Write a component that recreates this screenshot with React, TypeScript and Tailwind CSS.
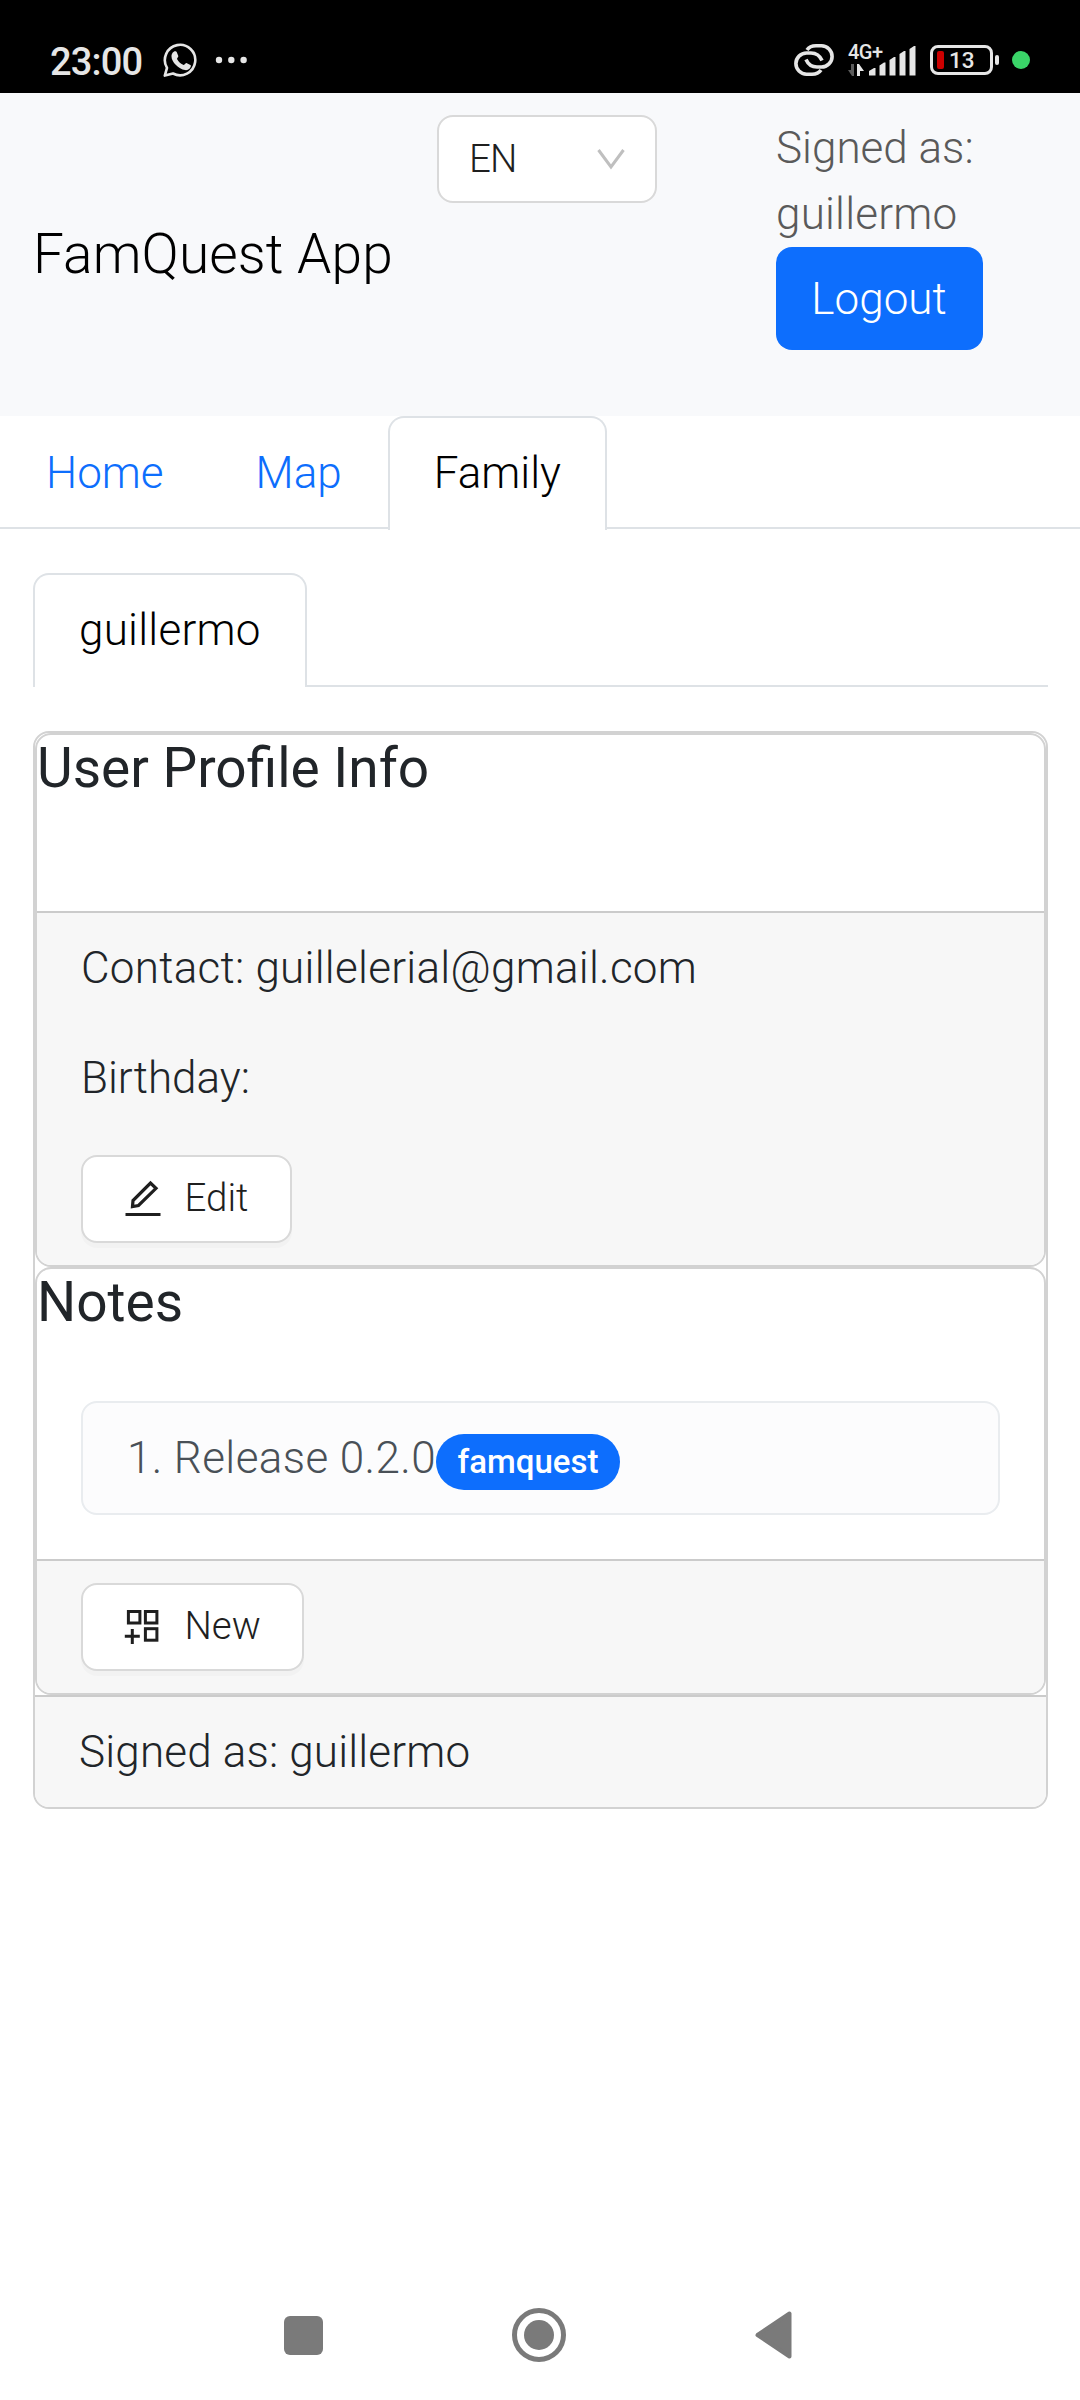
import React from "react";

function StatusBar() {
  return (
    <div className="flex h-[93px] w-full shrink-0 items-start bg-black text-[#e6e6e6]">
      <div className="ml-[50px] mt-[40px] w-[93px] text-[38px] leading-[45px] font-medium tracking-[-0.8px]">23:00</div>
      <svg className="ml-[19px] mt-[42px]" width="37" height="37" viewBox="0 0 37 37" fill="none" stroke="currentColor">
        <path strokeWidth="2.600" strokeLinejoin="round" d="M2.800 33.600 5 25.800A15.200 15.200 0 1 1 11 31.500z" />
        <path fill="currentColor" stroke="none" d="M13.200 9.200c.8 0 1.200.2 1.500.9l1.600 3.800c.3.800-1.500 2.400-1.300 3 1.600 3.100 3.800 4.900 6.700 6 .8.200 2-2 2.700-1.800l4 1.900c.6.3.5 1 .3 1.800-.7 2.500-3.600 3.600-5.600 3.300-3.500-.5-6.500-2.300-9.400-5.300-2.300-2.500-4.200-5.200-4.200-8.300 0-2.800 1.700-5.300 3.700-5.300z" />
      </svg>
      <svg className="ml-[16px] mt-[54px]" width="34" height="12" viewBox="0 0 34 12" fill="currentColor">
        <circle cx="4" cy="6" r="3.200" />
        <circle cx="16.300" cy="6" r="3.200" />
        <circle cx="28.600" cy="6" r="3.200" />
      </svg>
      <div className="ml-auto mr-[50px] flex">
        <svg className="mt-[43px]" width="42" height="34" viewBox="0 0 42 34" fill="none" stroke="currentColor" strokeWidth="3.600">
          <path d="M14 7C16 4 19 2.800 23 2.800h5.500a10.600 10.600 0 0 1 0 21.200H24c-5 0-9-3-11-7.500" />
          <path d="M28 27c-2 3-5 4.200-9 4.200h-5.500a10.600 10.600 0 0 1 0-21.200H18c5 0 9 3 11 7.500" />
        </svg>
        <div className="relative ml-[13px] mt-[43px] h-[34px] w-[70px]">
          <span className="absolute left-0 top-0 text-[20px] leading-[18px] font-medium tracking-[-0.5px]">4G+</span>
          <svg className="absolute left-0 top-0" width="70" height="34" viewBox="0 0 70 34" fill="currentColor">
            <path fill="#5a5a5a" d="M6 21v12H4l-4-6h3v-6z" />
            <path d="M9 33V21h2l5 7h-4v5z" />
            <path d="M21 32.500V28l5-3h1.500v7.500zM31.500 32.500V22.500l4.500-3h1.500v13zM41.500 32.500V17l4.500-3h1.500v18.500zM51.500 32.500V11l4.500-3h1.500v24.500zM61.500 32.500V6l4.500-3h1.500v29.500z" />
          </svg>
        </div>
        <div className="ml-[12px] mt-[45px] flex h-[30px] w-[63px] items-center rounded-[8px] border-3 border-current pl-[4px]">
          <span className="h-[18px] w-[7px] rounded-[2px] bg-[#cc0000]" />
          <span className="ml-[5px] text-[22.500px] leading-[24px] font-medium">13</span>
        </div>
        <span className="ml-[2px] mt-[55px] h-[10px] w-[4px] rounded-[2px] bg-current" />
        <span className="ml-[13px] mt-[51px] size-[18px] rounded-full bg-[#3ad468]" />
      </div>
    </div>
  );
}

function Header() {
  return (
    <header className="flex h-[323px] items-start bg-[#f8f9fb] pl-[33px]">
      <div className="w-[404px] self-center pb-[2px] text-[55px] leading-[82px] tracking-[0.1px] text-black">FamQuest App</div>
      <div className="mt-[22px] flex h-[88px] w-[220px] items-center justify-between rounded-[16px] border-2 border-[#d9d9d9] bg-white pl-[30px] pr-[30px] text-[38.500px] text-[#1f1f1f]">
        <span className="tracking-[-0.8px]">EN</span>
        <svg width="28" height="21" viewBox="0 0 28 21" fill="none" stroke="#bfbfbf" strokeWidth="3">
          <path d="M1.500 1 14 18 26.500 1" />
        </svg>
      </div>
      <div className="ml-[119px] mt-[22px] w-[210px] text-[44px] leading-[66px] text-[#5a5a5a]">
        <div>Signed as:</div>
        <div className="tracking-[0.2px]">guillermo</div>
        <button className="h-[103px] w-[207px] rounded-[16px] bg-[#0d6efd] pr-[1px] text-center text-white">Logout</button>
      </div>
    </header>
  );
}

function Tab({ label, active = false }: { label: string; active?: boolean }) {
  return active ? (
    <div className="mb-[-3px] h-[114px] rounded-t-[16px] border-2 border-b-0 border-[#dee2e6] bg-white px-[44px] pt-[22px] text-black">{label}</div>
  ) : (
    <div className="h-[111px] px-[46px] pt-[24px] text-[#0d6efd]">{label}</div>
  );
}

function CardFooter({ children }: { children: React.ReactNode }) {
  return <div className="border-t-2 border-[#cbcbcb] bg-[#f7f7f7] px-[44px] py-[22px]">{children}</div>;
}

function IconButton({ icon, label, width }: { icon: React.ReactNode; label: string; width: string }) {
  return (
    <button className={`flex h-[88px] items-center rounded-[16px] border-2 border-[#d9d9d9] bg-white pl-[41px] text-[38.500px] text-[#1f1f1f] shadow-[0_5px_0_rgba(0,0,0,0.02)] ${width}`}>
      {icon}
      <span className="ml-[22px] pb-[2px]">{label}</span>
    </button>
  );
}

function EditIcon() {
  return (
    <svg width="38.500" height="38.500" viewBox="0 0 38.500 38.500" fill="none" stroke="currentColor" strokeWidth="3.200">
      <path d="M1.500 34.500h35" />
      <path d="M8.500 26.500 9 20.500 26.500 3l5.500 5.300L14.500 25.500z" />
    </svg>
  );
}

function AddTilesIcon() {
  return (
    <svg width="38.500" height="38.500" viewBox="0 0 38.500 38.500" fill="none" stroke="currentColor" strokeWidth="3">
      <rect x="4.400" y="3.500" width="11.500" height="11.500" />
      <rect x="21.400" y="3.500" width="11.500" height="11.500" />
      <rect x="21.400" y="20.700" width="11.500" height="11.500" />
      <path d="M.8 28.300h15M8.300 21v15" />
    </svg>
  );
}

function NavigationBar() {
  return (
    <div className="mt-auto mb-[37px] flex h-[56px] items-center text-[#7a7a7a]">
      <div className="ml-[284px] size-[39px] rounded-[6px] bg-current" />
      <div className="ml-[189px] flex size-[54px] items-center justify-center rounded-full border-5 border-current">
        <div className="size-[30px] rounded-full bg-current" />
      </div>
      <svg className="ml-[189px]" width="38" height="48" viewBox="0 0 38 48" fill="currentColor" stroke="currentColor" strokeWidth="4" strokeLinejoin="round">
        <path d="M2.500 24 34.500 2.500v43z" />
      </svg>
    </div>
  );
}

export default function App() {
  return (
    <div className="flex h-[2400px] w-[1080px] flex-col overflow-hidden bg-white font-['Roboto',sans-serif] text-[44px] leading-[66px] font-light text-[#212529]">
      <StatusBar />
      <Header />
      <nav className="flex h-[113px] shrink-0 border-b-2 border-[#dee2e6]">
        <Tab label="Home" />
        <Tab label="Map" />
        <Tab label="Family" active />
      </nav>
      <main className="pr-[32px] pl-[33px] pt-[44px]">
        <nav className="flex h-[114px] border-b-2 border-[#dee2e6] tracking-[0.25px]">
          <Tab label="guillermo" active />
        </nav>
        <section className="mt-[44px] overflow-hidden rounded-[16px] border-2 border-[#d2d2d2]">
          <article className="overflow-hidden rounded-[16px] border-2 border-[#d2d2d2]">
            <h2 className="mb-[110px] text-[55px] leading-[66px] font-[450]">User Profile Info</h2>
            <CardFooter>
              <p className="mb-[44px] tracking-[0.27px]">Contact: guillelerial@gmail.com</p>
              <p className="mb-[44px]">Birthday:</p>
              <IconButton icon={<EditIcon />} label="Edit" width="w-[211px]" />
            </CardFooter>
          </article>
          <article className="overflow-hidden rounded-[16px] border-2 border-[#d2d2d2]">
            <h2 className="text-[55px] leading-[66px] font-[450]">Notes</h2>
            <div className="px-[44px] pt-[66px] pb-[44px]">
              <div className="flex h-[114px] items-baseline rounded-[16px] border-2 border-[#e9ecef] bg-[#fcfcfd] px-[44px] pt-[22px] text-[#495057]">
                <span className="tracking-[0.4px]">1. Release 0.2.0</span>
                <span className="rounded-[28px] bg-[#0d6efd] px-[21.500px] pt-[11px] pb-[12px] text-[33px] leading-[33px] font-[550] text-white">famquest</span>
              </div>
            </div>
            <CardFooter>
              <IconButton icon={<AddTilesIcon />} label="New" width="w-[223px]" />
            </CardFooter>
          </article>
          <CardFooter>
            <p className="tracking-[0.17px]">Signed as: guillermo</p>
          </CardFooter>
        </section>
      </main>
      <NavigationBar />
    </div>
  );
}
